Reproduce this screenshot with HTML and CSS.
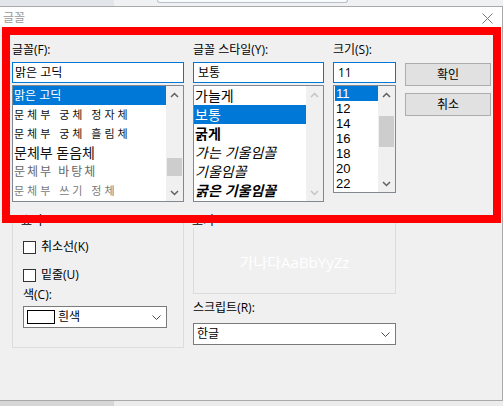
FILE: index.html
```html
<!DOCTYPE html>
<html lang="ko">
<head>
<meta charset="utf-8">
<title>글꼴</title>
<link rel="stylesheet" href="styles.css">
</head>
<body>
<div class="desk">
  <div class="desk-left"></div>
  <div class="desk-tab"></div>
</div>
<div class="dialog">
  <div class="titlebar">
    <span class="title">글꼴</span>
    <svg class="close" width="11" height="11" viewBox="0 0 11 11"><path d="M0.5 0.5 L10.5 10.5 M10.5 0.5 L0.5 10.5" stroke="#7a7a7a" stroke-width="1" fill="none"/></svg>
  </div>
  <div class="body">
    <div class="top">
      <div class="col">
        <div class="lbl">글꼴(F):</div>
        <div class="input">맑은 고딕</div>
        <div class="list list-font">
          <div class="items">
            <div class="item sel">맑은 고딕</div>
            <div class="item f-gung">문체부 궁체 정자체</div>
            <div class="item f-gung">문체부 궁체 흘림체</div>
            <div class="item f-dot">문체부 돋음체</div>
            <div class="item f-batang">문체부 바탕체</div>
            <div class="item f-sseugi">문체부 쓰기 정체</div>
          </div>
          <div class="scroll">
            <div class="sbtn"><svg width="9" height="6" viewBox="0 0 9 6"><path d="M1 5 L4.5 1.5 L8 5" fill="none" stroke="#606060" stroke-width="1.5"/></svg></div>
            <div class="track"><div class="thumb" style="margin-top:55px;height:18px"></div></div>
            <div class="sbtn"><svg width="9" height="6" viewBox="0 0 9 6"><path d="M1 1 L4.5 4.5 L8 1" fill="none" stroke="#606060" stroke-width="1.5"/></svg></div>
          </div>
        </div>
      </div>
      <div class="col">
        <div class="lbl">글꼴 스타일(Y):</div>
        <div class="input input-style">보통</div>
        <div class="list list-style">
          <div class="items">
            <div class="item">가늘게</div>
            <div class="item sel">보통</div>
            <div class="item s-bold">굵게</div>
            <div class="item s-italic">가는 기울임꼴</div>
            <div class="item s-italic">기울임꼴</div>
            <div class="item s-bold s-italic">굵은 기울임꼴</div>
          </div>
          <div class="scroll">
            <div class="sbtn"><svg width="9" height="6" viewBox="0 0 9 6"><path d="M1 5 L4.5 1.5 L8 5" fill="none" stroke="#c4c4c4" stroke-width="1.5"/></svg></div>
            <div class="track"></div>
            <div class="sbtn"><svg width="9" height="6" viewBox="0 0 9 6"><path d="M1 1 L4.5 4.5 L8 1" fill="none" stroke="#c4c4c4" stroke-width="1.5"/></svg></div>
          </div>
        </div>
      </div>
      <div class="col">
        <div class="lbl">크기(S):</div>
        <div class="input input-size">11</div>
        <div class="list list-size">
          <div class="items">
            <div class="item sel">11</div>
            <div class="item">12</div>
            <div class="item">14</div>
            <div class="item">16</div>
            <div class="item">18</div>
            <div class="item">20</div>
            <div class="item">22</div>
          </div>
          <div class="scroll">
            <div class="sbtn"><svg width="9" height="6" viewBox="0 0 9 6"><path d="M1 5 L4.5 1.5 L8 5" fill="none" stroke="#606060" stroke-width="1.5"/></svg></div>
            <div class="track"><div class="thumb" style="margin-top:13px;height:31px"></div></div>
            <div class="sbtn"><svg width="9" height="6" viewBox="0 0 9 6"><path d="M1 1 L4.5 4.5 L8 1" fill="none" stroke="#606060" stroke-width="1.5"/></svg></div>
          </div>
        </div>
      </div>
      <div class="col col-buttons">
        <button class="btn">확인</button>
        <button class="btn">취소</button>
      </div>
    </div>

    <div class="bottom">
      <fieldset class="group group-effects">
        <legend>효과</legend>
        <div class="check check-first"><span class="box"></span>취소선(K)</div>
        <div class="check"><span class="box"></span>밑줄(U)</div>
        <div class="lbl-small">색(C):</div>
        <div class="combo combo-color">
          <span class="swatch"></span>
          <span class="combo-text">흰색</span>
          <svg class="chev" width="9" height="5" viewBox="0 0 9 5"><path d="M0.5 0.5 L4.5 4.5 L8.5 0.5" fill="none" stroke="#4d4d4d" stroke-width="1"/></svg>
        </div>
      </fieldset>
      <div class="col">
        <fieldset class="group group-preview">
          <legend>보기</legend>
          <div class="sample">가나다AaBbYyZz</div>
        </fieldset>
        <div class="lbl-small lbl-script">스크립트(R):</div>
        <div class="combo combo-script">
          <span class="combo-text">한글</span>
          <svg class="chev" width="9" height="5" viewBox="0 0 9 5"><path d="M0.5 0.5 L4.5 4.5 L8.5 0.5" fill="none" stroke="#4d4d4d" stroke-width="1"/></svg>
        </div>
      </div>
    </div>
  </div>
</div>
<div class="desk-bottom">
  <div class="desk-left-b"></div>
</div>
<div class="highlight-frame"></div>
</body>
</html>
```

FILE: styles.css
```css
* { box-sizing: border-box; }

html, body {
  margin: 0;
  padding: 0;
}

body {
  width: 503px;
  height: 406px;
  overflow: hidden;
  position: relative;
  font-family: "Open Sans", "Noto Sans CJK KR", sans-serif;
  font-size: 12px;
  line-height: 16px;
  color: #000;
  background: #ebebeb;
}

/* surrounding desktop strips */
.desk {
  display: flex;
  height: 6px;
  background: #f0f1f3;
}
.desk-left {
  width: 114px;
  background: #e2e5e9;
}
.desk-tab {
  margin-left: 43px;
  width: 191px;
  height: 3px;
  border: 1px solid #b9c0ca;
  border-top: 0;
  border-radius: 0 0 4px 4px;
  background: #f9fafb;
}
.desk-bottom {
  display: flex;
  height: 5px;
  background: #ececec;
}
.desk-left-b {
  width: 114px;
  background: #d6d6d6;
}

/* dialog */
.dialog {
  height: 395px;
  border-top: 1px solid #a9a9a9;
  border-right: 1px solid #a9a9a9;
  border-bottom: 1px solid #a9a9a9;
  background: #f0f0f0;
}
.titlebar {
  height: 21px;
  background: #fff;
  display: flex;
  align-items: center;
  justify-content: space-between;
  padding: 0 9px 0 3px;
}
.title {
  color: #9a9a9a;
  font-size: 12px;
  line-height: 16px;
}
.close { margin-top: 2px; }

.body {
  padding: 14px 0 0 12px;
}

.top {
  display: grid;
  grid-template-columns: 172px 131px 63px 86px;
  column-gap: 9px;
  align-items: start;
}
.col {
  display: flex;
  flex-direction: column;
}
.lbl {
  height: 16px;
  line-height: 16px;
  margin-bottom: 4px;
  white-space: nowrap;
}
.input {
  height: 21px;
  border: 1px solid #0078d7;
  background: #fff;
  padding: 0 2px;
  line-height: 19px;
  margin-bottom: 2px;
  white-space: nowrap;
}
.input-style { padding-left: 4px; }
.input-size { padding-left: 4px; }

.list {
  display: flex;
  border: 1px solid #828790;
  background: #fff;
  height: 117px;
  overflow: hidden;
}
.list-size { height: 108px; }

.items {
  flex: 1;
  min-width: 0;
  overflow: hidden;
}
.item {
  height: 19px;
  line-height: 19px;
  padding-left: 1px;
  white-space: nowrap;
}
.item.sel {
  background: #0078d7;
  color: #fff;
}

/* font list samples */
.f-gung {
  font-size: 11px;
  letter-spacing: 3px;
  color: #111;
}
.f-dot {
  font-size: 14px;
  color: #111;
}
.f-batang {
  font-size: 12px;
  letter-spacing: 2px;
  color: #666;
}
.f-sseugi {
  font-size: 11px;
  letter-spacing: 3px;
  color: #7a7a7a;
}

/* style list */
.list-style .item {
  font-size: 14px;
  font-family: "Noto Sans CJK KR", sans-serif;
}
.s-bold { font-weight: 700; }
.s-italic { font-style: italic; }

/* size list */
.list-size .items { padding-left: 1px; }
.list-size .item {
  height: 15px;
  line-height: 15px;
  padding-left: 1px;
  font-family: "Liberation Sans", sans-serif;
  font-size: 13px;
}

/* scrollbars */
.scroll {
  width: 17px;
  flex: none;
  display: flex;
  flex-direction: column;
  background: #f0f0f0;
}
.sbtn {
  height: 17px;
  display: flex;
  align-items: center;
  justify-content: center;
  flex: none;
}
.track {
  flex: 1;
  display: flex;
  flex-direction: column;
  align-items: stretch;
}
.thumb {
  background: #cdcdcd;
  margin-left: 1px;
  margin-right: 1px;
}

/* buttons */
.col-buttons {
  padding-top: 21px;
  gap: 7px;
}
.btn {
  height: 23px;
  width: 86px;
  border: 1px solid #adadad;
  background: #e1e1e1;
  font-family: inherit;
  font-size: 12px;
  line-height: 16px;
  color: #000;
  padding: 0;
}

/* lower section */
.bottom {
  display: grid;
  grid-template-columns: 172px 203px;
  column-gap: 9px;
  margin-top: 12px;
  align-items: start;
}
.group {
  border: 1px solid #dcdcdc;
  margin: 0;
  padding: 0 10px 19px 10px;
  min-width: 0;
}
.group legend {
  padding: 0;
  margin-left: -2px;
  font-size: 12px;
  line-height: 14px;
}
.check {
  display: flex;
  align-items: center;
  height: 20px;
  margin-top: 8px;
  gap: 5px;
}
.check-first { margin-top: 9px; }
.box {
  width: 13px;
  height: 13px;
  border: 1px solid #333;
  background: #fff;
  flex: none;
}
.lbl-small {
  line-height: 14px;
  height: 14px;
  margin-top: 3px;
  white-space: nowrap;
}
.combo {
  display: flex;
  align-items: center;
  height: 22px;
  border: 1px solid #7a7a7a;
  background: #fff;
  margin-top: 4px;
  padding: 0 5px 0 3px;
}
.combo-color { width: 144px; }
.swatch {
  width: 28px;
  height: 14px;
  border: 1px solid #000;
  background: #fff;
  margin-right: 3px;
  flex: none;
}
.combo-text {
  flex: 1;
  line-height: 16px;
}
.chev { flex: none; }

.group-preview {
  height: 80px;
  padding: 0;
}
.sample {
  text-align: center;
  color: #fff;
  font-size: 15px;
  line-height: 20px;
  margin-top: 24px;
}
.lbl-script { margin-top: 7px; }
.combo-script {
  width: 203px;
  margin-top: 8px;
}

/* red annotation frame drawn over the dialog */
.highlight-frame {
  position: absolute;
  left: 2px;
  top: 27px;
  width: 499px;
  height: 196px;
  border: 8px solid #ff0000;
  pointer-events: none;
}
```
